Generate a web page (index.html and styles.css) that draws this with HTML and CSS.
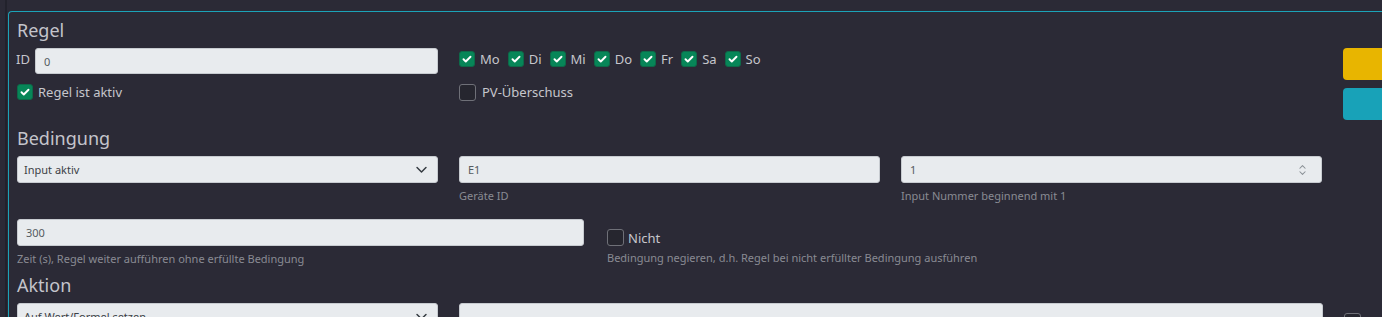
FILE: index.html
```html
<!DOCTYPE html>
<html lang="de">
<head>
<meta charset="utf-8">
<title>Regel</title>
<link rel="stylesheet" href="styles.css">
</head>
<body>
<div class="page">
  <div class="card">
    <h2 class="section-title">Regel</h2>
    <div class="section-grid">
      <div class="fields">
        <div class="id-row">
          <label class="lbl" for="rid">ID</label>
          <input id="rid" class="inp" type="text" value="0">
        </div>
        <div class="days">
          <label class="chk"><span class="box on"><svg viewBox="0 0 16 16"><path d="M4 8.3l2.6 2.5L12 5.4"/></svg></span>Mo</label>
          <label class="chk"><span class="box on"><svg viewBox="0 0 16 16"><path d="M4 8.3l2.6 2.5L12 5.4"/></svg></span>Di</label>
          <label class="chk"><span class="box on"><svg viewBox="0 0 16 16"><path d="M4 8.3l2.6 2.5L12 5.4"/></svg></span>Mi</label>
          <label class="chk"><span class="box on"><svg viewBox="0 0 16 16"><path d="M4 8.3l2.6 2.5L12 5.4"/></svg></span>Do</label>
          <label class="chk"><span class="box on"><svg viewBox="0 0 16 16"><path d="M4 8.3l2.6 2.5L12 5.4"/></svg></span>Fr</label>
          <label class="chk"><span class="box on"><svg viewBox="0 0 16 16"><path d="M4 8.3l2.6 2.5L12 5.4"/></svg></span>Sa</label>
          <label class="chk"><span class="box on"><svg viewBox="0 0 16 16"><path d="M4 8.3l2.6 2.5L12 5.4"/></svg></span>So</label>
        </div>
        <div class="empty"></div>
        <label class="chk row2"><span class="box on"><svg viewBox="0 0 16 16"><path d="M4 8.3l2.6 2.5L12 5.4"/></svg></span>Regel ist aktiv</label>
        <label class="chk row2"><span class="box off"></span>PV-Überschuss</label>
      </div>
      <div class="actions">
        <button class="btn btn-warn" type="button"></button>
        <button class="btn btn-info" type="button"></button>
      </div>
    </div>

    <h2 class="section-title">Bedingung</h2>
    <div class="three">
      <div class="field">
        <div class="inp select">Input aktiv<svg class="chev" viewBox="0 0 16 16"><path d="M2.5 5.5L8 11l5.5-5.5"/></svg></div>
      </div>
      <div class="field">
        <input class="inp" type="text" value="E1">
        <div class="help">Geräte ID</div>
      </div>
      <div class="field">
        <div class="inp number">1<svg class="spin" viewBox="0 0 10 16"><path d="M2 6l3-3 3 3M2 10l3 3 3-3"/></svg></div>
        <div class="help">Input Nummer beginnend mit 1</div>
      </div>
    </div>
    <div class="two">
      <div class="field">
        <input class="inp" type="text" value="300">
        <div class="help">Zeit (s), Regel weiter aufführen ohne erfüllte Bedingung</div>
      </div>
      <div class="field nicht">
        <label class="chk"><span class="box off"></span>Nicht</label>
        <div class="help">Bedingung negieren, d.h. Regel bei nicht erfüllter Bedingung ausführen</div>
      </div>
    </div>

    <h2 class="section-title">Aktion</h2>
    <div class="aktion">
      <div class="inp select">Auf Wert/Formel setzen<svg class="chev" viewBox="0 0 16 16"><path d="M2.5 5.5L8 11l5.5-5.5"/></svg></div>
      <input class="inp" type="text" value="">
      <label class="chk extra"><span class="box off"></span>R</label>
    </div>
  </div>
</div>
</body>
</html>
```

FILE: styles.css
```css
* { box-sizing: border-box; }
html, body {
  margin: 0;
  padding: 0;
  background: #2b2a36;
  overflow: hidden;
  height: 317px;
}
body {
  font-family: "Noto Sans", "Open Sans", sans-serif;
  color: #c6c6cc;
}
.page {
  padding: 11px 0 0 6px;
  width: 1500px;
}
.card {
  margin-left: 2px;
  border: 1px solid #1ba3b8;
  border-right: none;
  border-bottom: none;
  border-radius: 4px 0 0 0;
  padding: 7px 0 0 8px;
  position: relative;
}
.card::before {
  content: "";
  position: absolute;
  left: -4px;
  top: -12px;
  width: 2px;
  height: 340px;
  background: #22222c;
}
.section-title {
  margin: 0 0 6px;
  font-size: 18px;
  font-weight: 400;
  line-height: 23px;
  color: #c4c4cb;
}
.section-grid {
  display: grid;
  grid-template-columns: 1305px 80px;
  column-gap: 21px;
  margin-bottom: 7px;
}
.fields {
  display: grid;
  grid-template-columns: 421px 421px 421px;
  grid-template-rows: 26px 20px;
  column-gap: 21px;
  row-gap: 8px;
}
.id-row {
  display: flex;
  align-items: center;
  gap: 5px;
}
.lbl {
  font-size: 13px;
  line-height: 16px;
  margin-top: -4px;
  margin-left: -1px;
}
.id-row .inp { flex: 1; }
.inp {
  display: block;
  width: 100%;
  height: 27px;
  margin: 0;
  padding: 0 8px;
  border: 1px solid #c7cbd0;
  border-radius: 3px;
  background: #e8ebee;
  font-family: inherit;
  font-size: 11px;
  color: #555b61;
  line-height: 25px;
  outline: none;
}
.id-row .inp { height: 26px; }
.select {
  display: flex;
  align-items: center;
  justify-content: space-between;
  padding-left: 6px;
  padding-right: 9px;
  color: #3c4146;
}
.chev {
  width: 13px;
  height: 13px;
  fill: none;
  stroke: #343a40;
  stroke-width: 1.8;
  stroke-linecap: round;
  stroke-linejoin: round;
}
.number {
  display: flex;
  align-items: center;
  justify-content: space-between;
  padding-right: 14px;
}
.spin {
  width: 9px;
  height: 14px;
  fill: none;
  stroke: #8a9096;
  stroke-width: 1.2;
  stroke-linecap: round;
  stroke-linejoin: round;
}
.days {
  display: flex;
  align-items: center;
  gap: 8px;
  padding-bottom: 5px;
}
.chk {
  display: inline-flex;
  align-items: center;
  gap: 5px;
  font-size: 13px;
  line-height: 16px;
  color: #c6c6cc;
}
.box {
  display: inline-flex;
  align-items: center;
  justify-content: center;
  width: 16px;
  height: 16px;
  border-radius: 3px;
  flex: none;
}
.box.on {
  background: #078658;
  border: 1px solid #0d6a49;
}
.box.on svg {
  width: 14px;
  height: 14px;
  fill: none;
  stroke: #ffffff;
  stroke-width: 2.2;
  stroke-linecap: round;
  stroke-linejoin: round;
}
.box.off {
  background: #26262f;
  border: 1px solid #6f7078;
  width: 17px;
  height: 17px;
}
.row2 { align-self: center; }
.row2 .box.off { margin-right: 1px; }
.actions {
  display: flex;
  flex-direction: column;
  gap: 8px;
}
.btn {
  display: block;
  width: 80px;
  height: 32px;
  border: none;
  border-radius: 4px;
  padding: 0;
}
.btn-warn { background: #e8b500; }
.btn-info { background: #18a2b8; }
.three {
  display: grid;
  grid-template-columns: 421px 421px 421px;
  column-gap: 21px;
  margin-bottom: 16px;
}
.two {
  display: grid;
  grid-template-columns: 567px 700px;
  column-gap: 23px;
  margin-bottom: 8px;
}
.help {
  margin-top: 5px;
  font-size: 11px;
  line-height: 15px;
  color: #898a93;
}
.nicht { padding-top: 10px; }
.nicht .chk { display: flex; gap: 4px; }
.nicht .help { margin-top: 4px; }
.aktion {
  display: grid;
  grid-template-columns: 421px 864px 80px;
  column-gap: 21px;
}
.extra { margin-top: 10px; }
```
